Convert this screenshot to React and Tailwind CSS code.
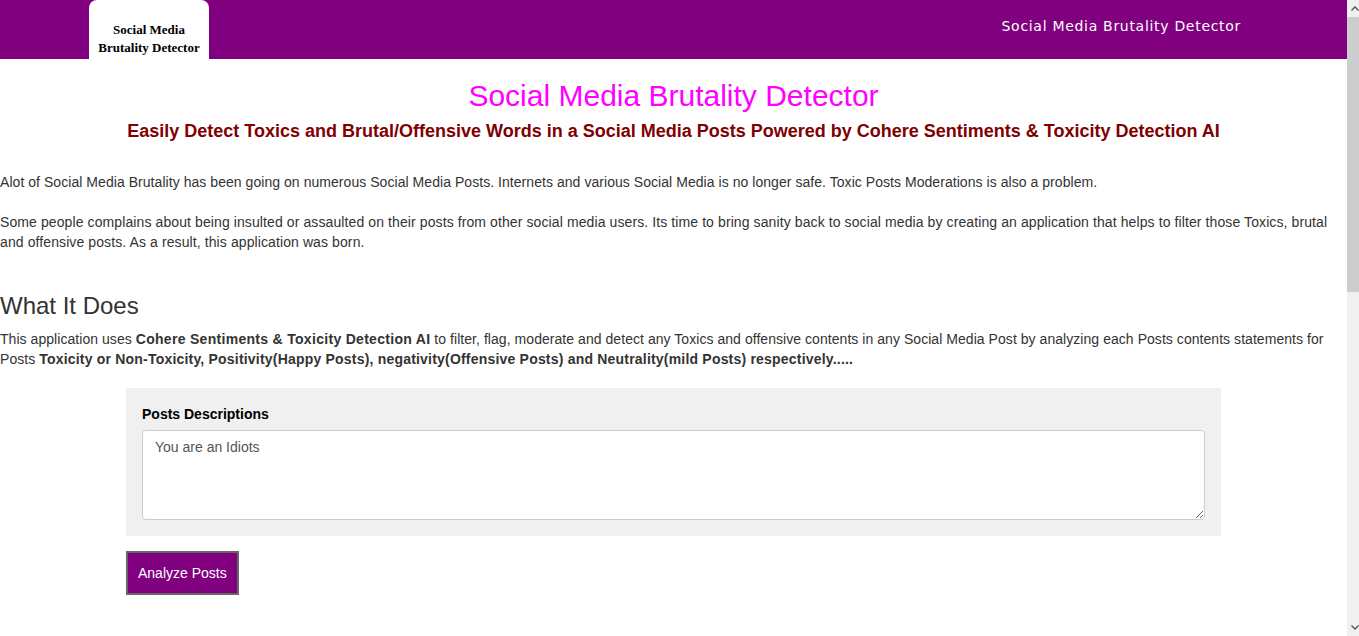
const ScrollBar = () => (
  <div className="sticky top-0 h-[636px] w-[12px] shrink-0 bg-[#f0f0f0] flex flex-col">
    <div className="h-[17px] flex items-center justify-center">
      <svg width="8" height="5" viewBox="0 0 8 5" className="ml-[3px]">
        <path d="M0.5 4.5 L4 1 L7.5 4.5" fill="none" stroke="#505050" strokeWidth="1.3" />
      </svg>
    </div>
    <div className="h-[275px] bg-[#cdcdcd]" />
    <div className="flex-1" />
    <div className="h-[17px] flex items-center justify-center">
      <svg width="8" height="5" viewBox="0 0 8 5" className="ml-[3px]">
        <path d="M0.5 0.5 L4 4 L7.5 0.5" fill="none" stroke="#505050" strokeWidth="1.3" />
      </svg>
    </div>
  </div>
);

const App = () => {
  return (
    <div className="flex items-start bg-white font-['Liberation_Sans',Arial,sans-serif] text-[14px] leading-[20px] text-[#333]">
      <div className="flex-1 min-w-0 min-h-[1390px]">
        <header className="h-[59px] bg-[#800080] flex items-stretch">
          <div className="ml-[89px] w-[120px] bg-white rounded-t-[8px] flex items-end justify-center pb-[2px]">
            <span className="font-['Liberation_Serif',serif] font-bold text-[13px] leading-[18px] text-black text-center">
              Social Media
              <br />
              Brutality Detector
            </span>
          </div>
          <div className="ml-auto mr-[106px] flex items-start pt-[16px]">
            <span className="font-['DejaVu_Sans',sans-serif] text-[14px] leading-[20px] tracking-[0.7px] text-white">
              Social Media Brutality Detector
            </span>
          </div>
        </header>

        <main>
          <h1 className="text-center text-[30px] leading-[36px] text-[#ff00ff] mt-[19px]">
            Social Media Brutality Detector
          </h1>
          <h3 className="text-center text-[18px] leading-[22px] font-bold text-[#800000] mt-[6px]">
            Easily Detect Toxics and Brutal/Offensive Words in a Social Media Posts Powered by Cohere Sentiments &amp; Toxicity Detection AI
          </h3>

          <p className="mt-[30px] tracking-[0.05px]">
            Alot of Social Media Brutality has been going on numerous Social Media Posts. Internets and various Social Media is no longer safe. Toxic Posts Moderations is also a problem.
          </p>
          <p className="mt-[20px] tracking-[0.1px]">
            Some people complains about being insulted or assaulted on their posts from other social media users. Its time to bring sanity back to social media by creating an application that helps to filter those Toxics, brutal and offensive posts. As a result, this application was born.
          </p>

          <h2 className="text-[24px] leading-[28px] mt-[40px]">What It Does</h2>
          <p className="mt-[9px] tracking-[0.05px]">
            This application uses <b className="tracking-[0.3px]">Cohere Sentiments &amp; Toxicity Detection AI</b> to filter, flag, moderate and detect any Toxics and offensive contents in any Social Media Post by analyzing each Posts contents statements for Posts{' '}
            <b className="tracking-[0.2px]">Toxicity or Non-Toxicity, Positivity(Happy Posts), negativity(Offensive Posts) and Neutrality(mild Posts) respectively.....</b>
          </p>

          <div className="w-[1095px] mx-auto mt-[19px]">
            <div className="bg-[#f0f0f0] p-[16px]">
              <label className="block font-bold text-black mb-[6px]">Posts Descriptions</label>
              <textarea
                className="block w-full h-[90px] border border-[#ccc] rounded-[4px] bg-white px-[12px] py-[6px] text-[#555] text-[14px] leading-[20px] outline-none"
                defaultValue="You are an Idiots"
              />
            </div>
            <button className="mt-[15px] h-[44px] px-[10px] bg-[#800080] border-2 border-[#666] text-white text-[14px]">
              Analyze Posts
            </button>
          </div>
        </main>
      </div>
      <ScrollBar />
    </div>
  );
};

export default App;
